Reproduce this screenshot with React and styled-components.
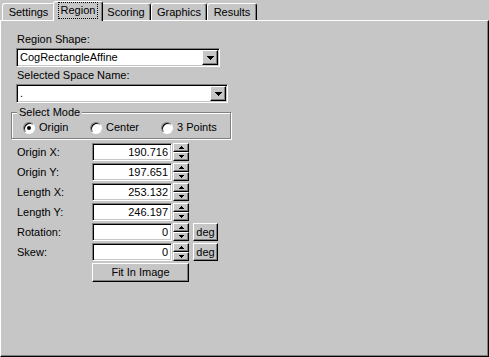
import styled, { createGlobalStyle } from 'styled-components';

const GlobalStyle = createGlobalStyle`
  html, body {
    margin: 0;
    padding: 0;
    background: #c6c6c6;
  }
  * {
    box-sizing: border-box;
  }
`;

const Window = styled.div`
  width: 489px;
  height: 357px;
  display: flex;
  flex-direction: column;
  background: #c6c6c6;
  font-family: "Liberation Sans", Arial, sans-serif;
  font-size: 11px;
  color: #000;
`;

const TabBar = styled.div`
  height: 20px;
  display: flex;
  align-items: flex-end;
  padding-left: 2px;
`;

const Tab = styled.div`
  position: relative;
  width: ${(p) => p.$w}px;
  height: ${(p) => (p.$active ? 20 : 17)}px;
  margin: ${(p) => (p.$active ? '0 -2px -1px -2px' : '0')};
  z-index: ${(p) => (p.$active ? 1 : 0)};
  display: flex;
  align-items: center;
  justify-content: center;
  padding-bottom: ${(p) => (p.$active ? 2 : 0)}px;
  background: #c6c6c6;
  border-top: 1px solid #fff;
  border-left: 1px solid #fff;
  border-right: 1px solid #000;
  border-radius: 3px 3px 0 0;
  box-shadow: inset -1px 0 #808080;
  line-height: 13px;
`;

const FocusText = styled.span`
  outline: 1px dotted #000;
  padding: 1px 2px;
`;

const Panel = styled.div`
  flex: 1;
  display: flex;
  flex-direction: column;
  align-items: flex-start;
  padding: 12px 0 0 15px;
  border-top: 1px solid #fff;
  border-left: 1px solid #fff;
  border-right: 1px solid #000;
  border-bottom: 1px solid #000;
  box-shadow: inset -1px -1px #808080;
`;

const Caption = styled.div`
  line-height: 13px;
  margin-top: ${(p) => p.$top || 0}px;
  padding-left: 1px;
`;

const Combo = styled.div`
  width: ${(p) => p.$w}px;
  height: 19px;
  margin-top: 2px;
  display: flex;
  align-items: stretch;
  background: #fff;
  border: 1px solid;
  border-color: #808080 #fff #fff #808080;
  box-shadow: inset 1px 1px #000, inset -1px -1px #c6c6c6;
  padding: 1px;
`;

const ComboText = styled.div`
  flex: 1;
  padding-left: 2px;
  line-height: 15px;
`;

const DropButton = styled.div`
  width: 16px;
  display: flex;
  align-items: center;
  justify-content: center;
  background: #c6c6c6;
  border: 1px solid;
  border-color: #fff #000 #000 #fff;
  box-shadow: inset -1px -1px #808080;
`;

const Group = styled.fieldset`
  width: 220px;
  margin: 3px 0 0 -5px;
  padding: 2px 0 4px 11px;
  border: 1px solid #808080;
  box-shadow: inset 1px 1px #fff, 1px 1px #fff;
  display: flex;
`;

const Legend = styled.legend`
  margin-left: -6px;
  padding: 0 2px;
  line-height: 13px;
  background: #c6c6c6;
`;

const RadioOption = styled.label`
  width: ${(p) => p.$w}px;
  display: flex;
  align-items: center;
  gap: 4px;
  line-height: 13px;
`;

const RadioCircle = styled.span`
  width: 12px;
  height: 12px;
  border-radius: 50%;
  background: #fff;
  border: 1px solid;
  border-color: #808080 #fff #fff #808080;
  box-shadow: inset 1px 1px #000;
  display: flex;
  align-items: center;
  justify-content: center;
  &::after {
    content: '';
    width: 4px;
    height: 4px;
    border-radius: 50%;
    background: ${(p) => (p.$checked ? '#000' : 'transparent')};
  }
`;

const Fields = styled.div`
  margin-top: 4px;
  display: flex;
  flex-direction: column;
  gap: 2px;
`;

const Row = styled.div`
  display: flex;
  align-items: center;
  height: 18px;
`;

const FieldLabel = styled.div`
  width: 76px;
  padding-left: 1px;
`;

const NumberBox = styled.input`
  width: 80px;
  height: 18px;
  margin: 0;
  padding: 0 3px 0 0;
  font: inherit;
  text-align: right;
  background: #fff;
  border: 1px solid;
  border-color: #808080 #fff #fff #808080;
  box-shadow: inset 1px 1px #000, inset -1px -1px #c6c6c6;
  outline: none;
`;

const Spinner = styled.div`
  width: 16px;
  height: 18px;
  margin-left: 1px;
  display: flex;
  flex-direction: column;
`;

const SpinButton = styled.div`
  flex: 1;
  display: flex;
  align-items: center;
  justify-content: center;
  background: #c6c6c6;
  border: 1px solid;
  border-color: #fff #000 #000 #fff;
  box-shadow: inset -1px -1px #808080;
`;

const Button = styled.button`
  width: ${(p) => p.$w}px;
  height: ${(p) => p.$h || 18}px;
  margin: 0 0 0 ${(p) => p.$left || 0}px;
  padding: 0;
  font: inherit;
  color: #000;
  background: #c6c6c6;
  border: 1px solid;
  border-color: #fff #000 #000 #fff;
  box-shadow: inset -1px -1px #808080;
  cursor: default;
`;

const DownArrow = () => (
  <svg width="7" height="4" viewBox="0 0 7 4" shapeRendering="crispEdges">
    <path d="M0 0h7v1h-1v1h-1v1h-1v1h-1v-1h-1v-1h-1v-1h-1z" fill="#000" />
  </svg>
);

const SmallArrow = ({ up }) => (
  <svg width="5" height="3" viewBox="0 0 5 3" shapeRendering="crispEdges">
    {up ? (
      <path d="M2 0h1v1h1v1h1v1h-5v-1h1v-1h1z" fill="#000" />
    ) : (
      <path d="M0 0h5v1h-1v1h-1v1h-1v-1h-1v-1h-1z" fill="#000" />
    )}
  </svg>
);

const tabs = [
  { name: 'Settings', w: 53 },
  { name: 'Region', w: 46, active: true },
  { name: 'Scoring', w: 50 },
  { name: 'Graphics', w: 56 },
  { name: 'Results', w: 50 },
];

const fields = [
  { label: 'Origin X:', value: '190.716' },
  { label: 'Origin Y:', value: '197.651' },
  { label: 'Length X:', value: '253.132' },
  { label: 'Length Y:', value: '246.197' },
  { label: 'Rotation:', value: '0', unit: 'deg' },
  { label: 'Skew:', value: '0', unit: 'deg' },
];

const App = () => {
  return (
    <Window>
      <GlobalStyle />
      <TabBar>
        {tabs.map((t) => (
          <Tab key={t.name} $w={t.active ? t.w + 4 : t.w} $active={t.active}>
            {t.active ? <FocusText>{t.name}</FocusText> : t.name}
          </Tab>
        ))}
      </TabBar>

      <Panel>
        <Caption>Region Shape:</Caption>
        <Combo $w={204}>
          <ComboText>CogRectangleAffine</ComboText>
          <DropButton>
            <DownArrow />
          </DropButton>
        </Combo>

        <Caption $top={2}>Selected Space Name:</Caption>
        <Combo $w={212}>
          <ComboText>.</ComboText>
          <DropButton>
            <DownArrow />
          </DropButton>
        </Combo>

        <Group>
          <Legend>Select Mode</Legend>
          <RadioOption $w={67}>
            <RadioCircle $checked />
            Origin
          </RadioOption>
          <RadioOption $w={71}>
            <RadioCircle />
            Center
          </RadioOption>
          <RadioOption $w={60}>
            <RadioCircle />
            3 Points
          </RadioOption>
        </Group>

        <Fields>
          {fields.map((f) => (
            <Row key={f.label}>
              <FieldLabel>{f.label}</FieldLabel>
              <NumberBox defaultValue={f.value} />
              <Spinner>
                <SpinButton>
                  <SmallArrow up />
                </SpinButton>
                <SpinButton>
                  <SmallArrow />
                </SpinButton>
              </Spinner>
              {f.unit && (
                <Button $w={25} $left={4}>
                  {f.unit}
                </Button>
              )}
            </Row>
          ))}
          <Row>
            <FieldLabel />
            <Button $w={97} $h={19}>
              Fit In Image
            </Button>
          </Row>
        </Fields>
      </Panel>
    </Window>
  );
};

export default App;
